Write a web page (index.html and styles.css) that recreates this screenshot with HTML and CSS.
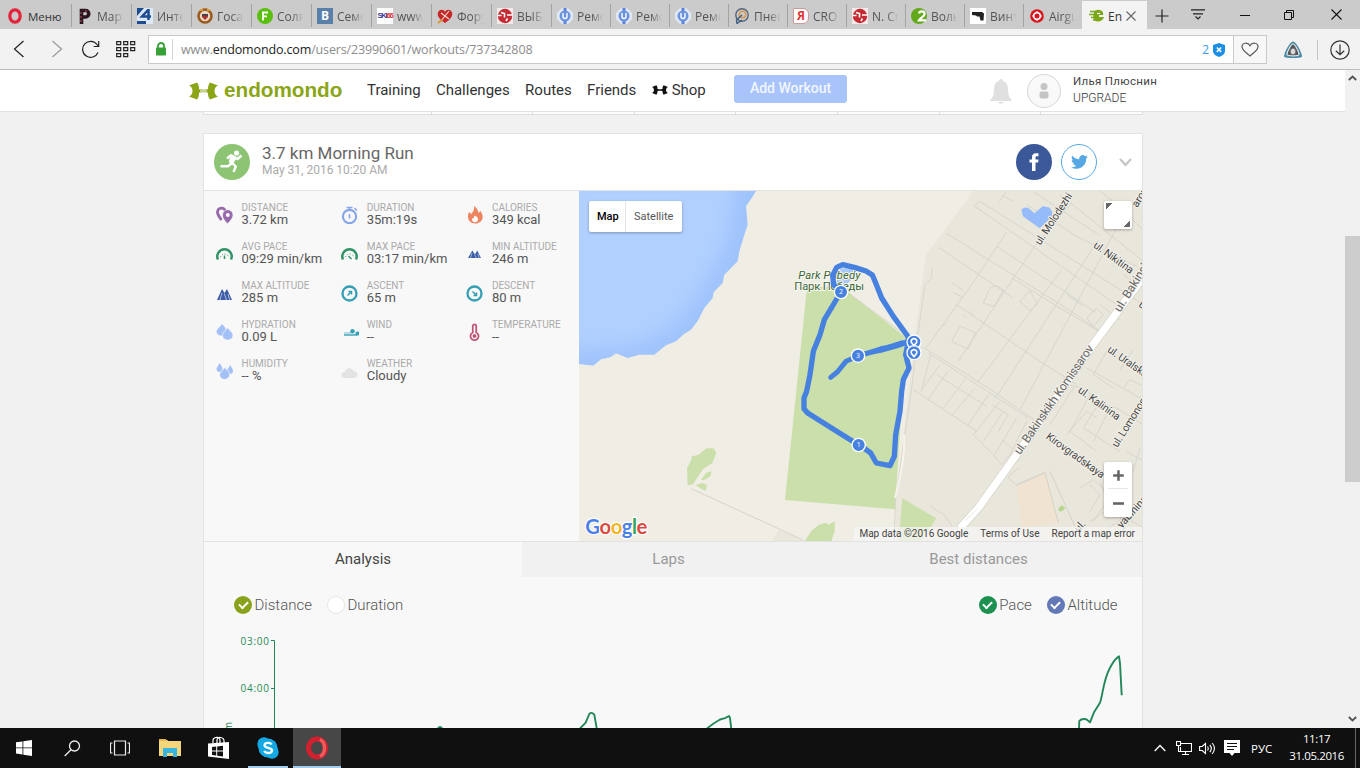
FILE: index.html
```
<!DOCTYPE html>
<html lang="en">

<head>
    <meta charset="UTF-8">
    <meta name="viewport" content="width=device-width, initial-scale=1.0">
    <title>Endomondo</title>
    <link rel="stylesheet" href="styles.css">
</head>

<body>

    <!-- Browser tabs -->
    <div class="tab-bar">
        <div class="menu-tab">
            <svg width="16" height="16" viewBox="0 0 16 16"><ellipse cx="8" cy="8" rx="5.2" ry="6.2" fill="none" stroke="#e3243b" stroke-width="3.2"/></svg>
            <span>Меню</span>
        </div>
        <div class="tab">
            <svg width="16" height="16" viewBox="0 0 16 16"><path d="M4.500 16V2.500h4a3 3 0 0 1 0 6.500H5" fill="none" stroke="#2b1520" stroke-width="3.600"/><path d="M4 14V3M8 3h2" stroke="#c0505a" stroke-width="1" stroke-dasharray="2 2"/></svg>
            <span>Маро</span>
        </div>
        <div class="tab">
            <svg width="16" height="16" viewBox="0 0 16 16"><path d="M0 0h16v16H0z" fill="#dfe9f5"/><path d="M0 0h7L0 8zM0 13h9v3H0z" fill="#1d4d90"/><path d="M11.500 1v11M11 2 5 8.500h9" fill="none" stroke="#1d4d90" stroke-width="2.500"/></svg>
            <span>Инте</span>
        </div>
        <div class="tab">
            <svg width="16" height="16" viewBox="0 0 16 16"><circle cx="8" cy="8" r="6.500" fill="#e8d9c0" stroke="#9a5a1e" stroke-width="2.600"/><path d="M5 6h6v3l-3 3-3-3z" fill="#a33"/><path d="M5 6h6v1.600H5z" fill="#345"/><path d="M3 2h3M10 2h3" stroke="#e0a030" stroke-width="2"/></svg>
            <span>Госав</span>
        </div>
        <div class="tab">
            <svg width="16" height="16" viewBox="0 0 16 16"><circle cx="8" cy="8" r="8" fill="#5bbf0f"/><path d="M6 12.500V4.500h5M6 8.300h4" fill="none" stroke="#fff" stroke-width="1.800"/></svg>
            <span>Соля</span>
        </div>
        <div class="tab">
            <span class="fav-letter vk">B</span>
            <span>Семе</span>
        </div>
        <div class="tab">
            <span class="fav-letter ski"><b>SKI</b><i>66</i></span>
            <span>www.</span>
        </div>
        <div class="tab">
            <svg width="16" height="16" viewBox="0 0 16 16"><path d="M8 15C2 11 0 8 1 4.500 2 1 7 1 8 4c1-3 6-3 7 .5C16 8 14 11 8 15z" fill="#c62828"/><path d="M4 5l8 6M12 3 4 13" stroke="#f2d6d0" stroke-width="1.200"/><path d="M1 15l4-3" stroke="#d9962e" stroke-width="2"/></svg>
            <span>Фору</span>
        </div>
        <div class="tab">
            <svg width="16" height="16" viewBox="0 0 16 16"><path d="M0 0h16v16H0z" fill="#f5eaea"/><circle cx="8" cy="8" r="7.200" fill="#c62a33"/><path d="M1 7.500h3.500M4 4.500l3.500 1v4M10 7h5.500M10.500 10.500 9 13" fill="none" stroke="#fff" stroke-width="1.600"/></svg>
            <span>ВЫБО</span>
        </div>
        <div class="tab narrow">
            <svg width="16" height="16" viewBox="0 0 16 16"><path d="M5 0h6l5 5v6l-5 5H5l-5-5V5z" fill="#e2e8f3"/><path d="M8 0v4M8 12v4" stroke="#5b84d8" stroke-width="3"/><circle cx="8" cy="8" r="5.500" fill="#6c93df"/><path d="M6 5v3.500a2 2 0 0 0 4 0V5" fill="none" stroke="#fff" stroke-width="1.400"/></svg>
            <span>Ремо</span>
        </div>
        <div class="tab narrow">
            <svg width="16" height="16" viewBox="0 0 16 16"><path d="M5 0h6l5 5v6l-5 5H5l-5-5V5z" fill="#e2e8f3"/><path d="M8 0v4M8 12v4" stroke="#5b84d8" stroke-width="3"/><circle cx="8" cy="8" r="5.500" fill="#6c93df"/><path d="M6 5v3.500a2 2 0 0 0 4 0V5" fill="none" stroke="#fff" stroke-width="1.400"/></svg>
            <span>Ремо</span>
        </div>
        <div class="tab narrow">
            <svg width="16" height="16" viewBox="0 0 16 16"><path d="M5 0h6l5 5v6l-5 5H5l-5-5V5z" fill="#e2e8f3"/><path d="M8 0v4M8 12v4" stroke="#5b84d8" stroke-width="3"/><circle cx="8" cy="8" r="5.500" fill="#6c93df"/><path d="M6 5v3.500a2 2 0 0 0 4 0V5" fill="none" stroke="#fff" stroke-width="1.400"/></svg>
            <span>Ремо</span>
        </div>
        <div class="tab narrow">
            <svg width="16" height="16" viewBox="0 0 16 16"><circle cx="8" cy="7" r="6.200" fill="none" stroke="#54657a" stroke-width="1.400"/><circle cx="8.500" cy="6.500" r="3.200" fill="none" stroke="#d69a55" stroke-width="1.500"/><path d="M8 7 2.500 12l.5 3.500L8 12" fill="none" stroke="#3e5c80" stroke-width="1.400"/></svg>
            <span>Пнев</span>
        </div>
        <div class="tab narrow">
            <span class="fav-letter ya">Я</span>
            <span>CRO</span>
        </div>
        <div class="tab narrow">
            <svg width="16" height="16" viewBox="0 0 16 16"><path d="M0 0h16v16H0z" fill="#f5eaea"/><circle cx="8" cy="8" r="7.200" fill="#c62a33"/><path d="M1 7.500h3.500M4 4.500l3.500 1v4M10 7h5.500M10.500 10.500 9 13" fill="none" stroke="#fff" stroke-width="1.600"/></svg>
            <span>N. Cr</span>
        </div>
        <div class="tab narrow">
            <svg width="16" height="16" viewBox="0 0 16 16"><circle cx="8" cy="8" r="8" fill="#62a81a"/><path d="M8 5.500c.5-3 6-3 5.500.8-.3 2-4 3.500-5.500 6h7" fill="none" stroke="#fff" stroke-width="2.300"/></svg>
            <span>Воль</span>
        </div>
        <div class="tab narrow">
            <svg width="16" height="16" viewBox="0 0 16 16"><path d="M0 0h16v16H0z" fill="#fff"/><path d="M2 4h10l2 1.500-.5 7h-3l-1-4H7L6 7.500 2 7z" fill="#222"/></svg>
            <span>Винт</span>
        </div>
        <div class="tab narrow">
            <svg width="16" height="16" viewBox="0 0 16 16"><circle cx="8" cy="8" r="6.800" fill="#d8141c"/><circle cx="8" cy="8" r="3.300" fill="none" stroke="#fff" stroke-width="1.600"/><path d="M8 3v2M8 11v2M3 8h2M11 8h2" stroke="#fff" stroke-width="1.200"/></svg>
            <span>Airgu</span>
        </div>
        <div class="tab active">
            <svg width="16" height="16" viewBox="0 0 16 16"><path d="M5 4.500C6 2 9 1 12 2.500c2 1 2.500 2.500 2 4.500h-4v2h5c-1 4-6 6-9 3.500C4 11 4 8 5 4.500z" fill="#7aa817"/><path d="M1 3.500h6M0 6.500h6M2 9.500h4M4 12h4" stroke="#7aa817" stroke-width="1.400"/><path d="M8 5.500h3" stroke="#fff" stroke-width="1.200"/></svg>
            <span>En</span>
            <svg class="tab-close" width="10" height="10" viewBox="0 0 10 10"><path d="M.5.5l9 9M9.500.5l-9 9" stroke="#666" stroke-width="1.100"/></svg>
        </div>
        <div class="window-buttons">
            <svg width="14" height="14" viewBox="0 0 14 14"><path d="M7 .5v13M.5 7h13" stroke="#222" stroke-width="1.200"/></svg>
            <svg width="14" height="12" viewBox="0 0 14 12"><path d="M0 .8h14M2 4.800h10M4.500 7.500 7 10l2.500-2.500" fill="none" stroke="#222" stroke-width="1.200"/></svg>
            <svg width="10" height="10" viewBox="0 0 10 10"><path d="M0 5.500h10" stroke="#111"/></svg>
            <svg width="10" height="10" viewBox="0 0 10 10"><path d="M.5 2.500h7v7h-7zM2.500 2.500v-2h7v7h-2" fill="none" stroke="#111"/></svg>
            <svg width="11" height="11" viewBox="0 0 11 11"><path d="M.5.5l10 10M10.500.5l-10 10" stroke="#111" stroke-width="1.100"/></svg>
        </div>
    </div>

    <!-- Address bar -->
    <div class="toolbar">
        <div class="nav-buttons">
            <svg width="12" height="18" viewBox="0 0 12 18"><path d="M10.500 1 1.500 9l9 8" fill="none" stroke="#222" stroke-width="1.200"/></svg>
            <svg width="12" height="18" viewBox="0 0 12 18"><path d="M1.500 1l9 8-9 8" fill="none" stroke="#999" stroke-width="1.200"/></svg>
            <svg width="20" height="18" viewBox="0 0 20 18"><path d="M17 12.500A8 8 0 1 1 16 4.500L17.500 6.500M17.700 1V6.500h-5" fill="none" stroke="#222" stroke-width="1.200"/></svg>
            <svg width="20" height="17" viewBox="0 0 20 17"><path d="M.7.700h4v3h-4zM7.700.700h4v3h-4zM14.700.700h4v3h-4zM.7 6.700h4v3h-4zM7.700 6.700h4v3h-4zM14.700 6.700h4v3h-4zM.7 12.700h4v3h-4zM7.700 12.700h4v3h-4z" fill="none" stroke="#222" stroke-width="1.200"/></svg>
        </div>
        <div class="address">
            <div class="lock">
                <svg width="10" height="14" viewBox="0 0 10 14"><path d="M2 7V4a3 3 0 0 1 6 0v3" fill="none" stroke="#37a137" stroke-width="1.800"/><rect y="5.500" width="10" height="8" rx=".8" fill="#37a137"/></svg>
            </div>
            <div class="url">www.<b>endomondo.com</b>/users/23990601/workouts/737342808</div>
            <span class="blocked">2</span>
            <svg class="shield" width="14" height="14" viewBox="0 0 14 14"><path d="M7 0l6 2v6c0 3-3 5-6 6-3-1-6-3-6-6V2z" fill="#1b8fe6"/><path d="M4.800 4.500l4.400 4.400M9.200 4.500 4.800 8.900" stroke="#fff" stroke-width="1.500"/></svg>
            <div class="heart">
                <svg width="18" height="15" viewBox="0 0 18 15"><path d="M9 14C5 10.500 1 8 1 4.700 1 .5 7 0 9 3.700 11 0 17 .5 17 4.700 17 8 13 10.500 9 14z" fill="none" stroke="#555" stroke-width="1.200"/></svg>
            </div>
        </div>
        <svg class="extension" width="20" height="18" viewBox="0 0 20 18"><path d="M10 .5c3 0 9 11 9 15 0 2-18 2-18 0C1 11.500 7 .5 10 .5z" fill="#4d8aa3"/><path d="M10 3c2 0 6 8 6 10.500 0 1.800-12 1.800-12 0C4 11 8 3 10 3z" fill="#555" stroke="#dfe8ec" stroke-width="1.200"/><ellipse cx="10" cy="10.500" rx="2.600" ry="3.300" fill="#ddd" stroke="#777"/></svg>
        <div class="download">
            <svg width="20" height="20" viewBox="0 0 20 20"><circle cx="10" cy="10" r="9.200" fill="none" stroke="#333" stroke-width="1.200"/><path d="M10 4.500v10M5.800 10.700l4.200 4 4.200-4" fill="none" stroke="#333" stroke-width="1.200"/></svg>
        </div>
    </div>

    <div class="viewport">
        <div class="page">
            <header class="site-header">
                <div class="logo">
                    <svg width="29" height="18" viewBox="0 0 29 18"><path d="M0 3.500 8 .5C10 3 10 5.500 10 7.300c3 .6 6 .6 9 0C19 5.500 19 3 21 .5l8 3c-2 .8-3.500 2.500-3.500 5.500s1.500 4.700 3.500 5.500l-8 3c-2-2.500-2-5-2-6.800-3-.6-6-.6-9 0 0 1.800 0 4.300-2 6.800l-8-3C2 13.700 3.500 12 3.500 9S2 4.300 0 3.500z" fill="#8aa516"/><path d="M11 9h7" stroke="#fff" stroke-width="1"/></svg>
                    <span>endomondo</span>
                </div>
                <nav class="site-nav">
                    <a>Training</a>
                    <a>Challenges</a>
                    <a>Routes</a>
                    <a>Friends</a>
                    <a class="shop"><svg width="16" height="10" viewBox="0 0 29 18"><path d="M0 3.500 8 .5C10 3 10 5.500 10 7c3 .6 6 .6 9 0C19 5.500 19 3 21 .5l8 3c-2 .8-3.500 2.500-3.500 5.500s1.500 4.700 3.500 5.500l-8 3c-2-2.500-2-5-2-6.500-3-.6-6-.6-9 0 0 1.500 0 4-2 6.500l-8-3C2 13.700 3.500 12 3.500 9S2 4.300 0 3.500z" fill="#111"/></svg>Shop</a>
                </nav>
                <button class="btn-add">Add Workout</button>
                <svg class="bell" width="22" height="25" viewBox="0 0 22 25"><path d="M11 0c1.500 0 2 1 2 2 3.500 1 5 4 5 8 0 6 1 8 3.500 10.500V22H.5v-1.500C3 18 4 16 4 10c0-4 1.500-7 5-8 0-1 .5-2 2-2z" fill="#e0e0e0"/><path d="M8 23h6c-.5 2-5.500 2-6 0z" fill="#e0e0e0"/></svg>
                <div class="avatar">
                    <svg width="10" height="18" viewBox="0 0 10 18"><circle cx="5" cy="4.500" r="3.500" fill="#c4c4c4"/><rect x=".5" y="9.500" width="9" height="7" rx="2" fill="#c4c4c4"/></svg>
                </div>
                <div class="user">
                    <div class="user-name">Илья Плюснин</div>
                    <div class="upgrade">UPGRADE</div>
                </div>
            </header>

            <div class="calendar-strip">
                <i class="wide"></i><i></i><i></i><i></i><i></i><i></i><i></i><i></i>
            </div>

            <main class="card">
                <div class="card-header">
                    <svg class="sport" width="36" height="36" viewBox="0 0 36 36"><circle cx="18" cy="18" r="18" fill="#8cc474"/><circle cx="22.600" cy="9" r="2.600" fill="#fff"/><path d="M13 14.500l4-3.200 4.500 2.200-3.300 5.500 3.600 3.500-2.300 5.500M17.500 19.500 14 22.300H6.500M20.500 13l3 2 4-3.500" fill="none" stroke="#fff" stroke-width="2.400" stroke-linejoin="round"/><path d="M18.500 12 17 19" fill="none" stroke="#fff" stroke-width="4.500"/></svg>
                    <div class="card-title">
                        <h1>3.7 km Morning Run</h1>
                        <p>May 31, 2016 10:20 AM</p>
                    </div>
                    <div class="social facebook">
                        <svg width="10" height="18" viewBox="0 0 10 18"><path d="M9.500.3v3H8c-1 0-1.500.4-1.500 1.500v1.700h3l-.4 3H6.500V18H3V9.500H.5v-3H3V4C3 1.500 4.500.2 7 .2z" fill="#fff"/></svg>
                    </div>
                    <div class="social twitter">
                        <svg width="17" height="14" viewBox="0 0 24 20"><path d="M24 2.400a10 10 0 0 1-2.800.8A5 5 0 0 0 23.300.5a10 10 0 0 1-3.100 1.200 4.900 4.900 0 0 0-8.400 4.500A14 14 0 0 1 1.700 1a4.900 4.900 0 0 0 1.500 6.600A5 5 0 0 1 1 7a4.900 4.900 0 0 0 3.900 4.900 5 5 0 0 1-2.200 0 4.900 4.900 0 0 0 4.600 3.400A10 10 0 0 1 0 17.400 14 14 0 0 0 21.500 5c1-.7 1.800-1.600 2.500-2.600z" fill="#55a8e4"/></svg>
                    </div>
                    <svg class="chevron" width="13" height="9" viewBox="0 0 13 9"><path d="M1 1l5.500 6L12 1" fill="none" stroke="#c8c8c8" stroke-width="2.400"/></svg>
                </div>

                <div class="workout">
                    <div class="stats">
                        <div class="stat">
                            <svg width="18" height="18" viewBox="0 0 18 18"><path d="M5.500 14C3 10.500 1.500 9 1.500 6.300a4 4 0 0 1 8-.5" fill="none" stroke="#9668ac" stroke-width="2.800"/><path d="M11.500 18C8.500 14 6.500 12.500 6.500 9a5 5 0 0 1 10.500 0c0 3.500-2.500 5-5.500 9z" fill="#9668ac" stroke="#f8f8f8" stroke-width=".6"/><circle cx="11.800" cy="9" r="2" fill="#f8f8f8"/></svg>
                            <div><h4>Distance</h4><p>3.72 km</p></div>
                        </div>
                        <div class="stat">
                            <svg width="18" height="18" viewBox="0 0 18 18"><circle cx="8.500" cy="10.500" r="6.600" fill="none" stroke="#87a6e8" stroke-width="2.200"/><path d="M5.500 1.500h6M8.500 1.500v3M13.500 2l2.500 2.500M8.500 8v4.500" stroke="#87a6e8" stroke-width="1.600"/></svg>
                            <div><h4>Duration</h4><p>35m:19s</p></div>
                        </div>
                        <div class="stat">
                            <svg width="18" height="18" viewBox="0 0 18 18"><path d="M8 0c4 3 4 5 4.500 7L14.500 5C20 13 14 17.500 9 17.500S0 13 3 6L5.500 8C7.500 5 8.500 3 8 0z" fill="#ef8461"/><path d="M8.500 9.500c3 1.500 3.500 2.500 3.500 4 0 3.500-6 3.500-6 0 0-1 .8-1.500 1.500-1z" fill="#fff"/></svg>
                            <div><h4>Calories</h4><p>349 kcal</p></div>
                        </div>
                        <div class="stat">
                            <svg width="18" height="18" viewBox="0 0 18 18"><path d="M2 14.500a7.200 7.200 0 1 1 13 0" fill="none" stroke="#33946a" stroke-width="2.500"/><path d="M4.500 12a4.500 4.500 0 0 1 8.500 0" fill="none" stroke="#33946a" stroke-dasharray="1 1.700"/><path d="M8.500 10.500v3.500" stroke="#33946a" stroke-width="1.500"/></svg>
                            <div><h4>Avg pace</h4><p>09:29 min/km</p></div>
                        </div>
                        <div class="stat">
                            <svg width="18" height="18" viewBox="0 0 18 18"><path d="M2 14.500a7.200 7.200 0 1 1 13 0" fill="none" stroke="#33946a" stroke-width="2.500"/><path d="M4.500 12a4.500 4.500 0 0 1 8.500 0" fill="none" stroke="#33946a" stroke-dasharray="1 1.700"/><path d="M7.500 11l3 3" stroke="#33946a" stroke-width="1.500"/></svg>
                            <div><h4>Max pace</h4><p>03:17 min/km</p></div>
                        </div>
                        <div class="stat">
                            <svg width="18" height="18" viewBox="0 0 18 18"><path d="M2 13 6.300 5.500 9 9.500l2.200-4L15 13z" fill="#3c5ca5"/><path d="M6 8l-1.500 5M8.700 9.500l1.600 3.500M12 9l1.200 4" stroke="#dfe7f5" stroke-width=".6"/></svg>
                            <div><h4>Min altitude</h4><p>246 m</p></div>
                        </div>
                        <div class="stat">
                            <svg width="18" height="18" viewBox="0 0 18 18"><path d="M1 16 6 5l2.500 4L11 5l5 11z" fill="#3c5ca5"/><path d="M6 9l-2 7M8.200 9.500 10.500 16M12 10l1.700 6" stroke="#dfe7f5" stroke-width=".7"/></svg>
                            <div><h4>Max altitude</h4><p>285 m</p></div>
                        </div>
                        <div class="stat">
                            <svg width="18" height="18" viewBox="0 0 18 18"><circle cx="8.500" cy="9.500" r="7" fill="none" stroke="#359fb5" stroke-width="2.300"/><path d="M6.500 11.500 10 8M7.500 7.500h3v3" fill="none" stroke="#359fb5" stroke-width="1.500"/></svg>
                            <div><h4>Ascent</h4><p>65 m</p></div>
                        </div>
                        <div class="stat">
                            <svg width="18" height="18" viewBox="0 0 18 18"><circle cx="8.500" cy="9.500" r="7" fill="none" stroke="#359fb5" stroke-width="2.300"/><path d="M6.500 7.500 10 11M10.500 8.500v3h-3" fill="none" stroke="#359fb5" stroke-width="1.500"/></svg>
                            <div><h4>Descent</h4><p>80 m</p></div>
                        </div>
                        <div class="stat">
                            <svg width="18" height="18" viewBox="0 0 18 18"><path d="M6 1c3 3 4 5 4 7.500C10 14 .5 14 .5 8.500.5 6 4.500 4 6 1z" fill="#a3c0f7"/><path d="M11 4.500c3 3 6 5 6 8 0 6-10.500 6-10.500 0 0-3 3.500-5 4.500-8z" fill="#a3c0f7" stroke="#f8f8f8" stroke-width=".7"/></svg>
                            <div><h4>Hydration</h4><p>0.09 L</p></div>
                        </div>
                        <div class="stat">
                            <svg width="18" height="18" viewBox="0 0 18 18"><path d="M3 10h7" stroke="#8cc6d2" stroke-width="1.200"/><path d="M3 12h13" stroke="#359fb5" stroke-width="1.400"/><circle cx="11.500" cy="8.300" r="2.200" fill="#359fb5"/><circle cx="16.500" cy="10.500" r="2.100" fill="#359fb5"/></svg>
                            <div><h4>Wind</h4><p>--</p></div>
                        </div>
                        <div class="stat">
                            <svg width="18" height="18" viewBox="0 0 18 18"><path d="M6.800 9.500V3a1.700 1.700 0 0 1 3.400 0v6.500a4 4 0 1 1-3.400 0z" fill="#fff" stroke="#bd5877" stroke-width="1.800"/><circle cx="8.500" cy="13" r="2" fill="#bd5877"/></svg>
                            <div><h4>Temperature</h4><p>--</p></div>
                        </div>
                        <div class="stat">
                            <svg width="18" height="18" viewBox="0 0 18 18"><path d="M3.500 1c2 3 3 4 3 6 0 4-6 4-6 0 0-2 2-3 3-6zM14 3c2 3 3 4 3 6 0 4-6 4-6 0 0-2 2-3 3-6z" fill="#a3c0f7"/><path d="M8.700 5.500c3 3 5 4.500 5 7 0 6.500-10 6.500-10 0 0-2.500 3-4 5-7z" fill="#a3c0f7" stroke="#f8f8f8" stroke-width=".7"/></svg>
                            <div><h4>Humidity</h4><p>-- %</p></div>
                        </div>
                        <div class="stat">
                            <svg width="18" height="18" viewBox="0 0 18 18"><path d="M3.500 16a3 3 0 0 1 0-6c1-4 7-5.500 9-1 5-.5 5 7 1 7z" fill="#e3e3e3"/></svg>
                            <div><h4>Weather</h4><p>Cloudy</p></div>
                        </div>
                    </div>

                    <div class="map">
                        <svg class="map-canvas" width="563" height="350" viewBox="0 0 1689 1050">
                            <defs>
                                <filter id="shore" x="-20%" y="-20%" width="140%" height="140%"><feGaussianBlur stdDeviation="26"/></filter>
                                <clipPath id="lake"><path d="M0 0H531L520 18 501 46 506 101 495 135 481 181 476 211 436 251 431 276 404 304 401 321 376 351 356 390 336 416 316 428 291 451 261 463 226 491 181 491 146 501 111 487 94 499 66 505 43 524 0 519z"/></clipPath>
                            </defs>
                            <rect width="1689" height="1050" fill="#f0ede5"/>
                            <path d="M1183 0 1040 194 1010 420 951 930 948 1050h741V0z" fill="#e9e6dc"/>
                            <path d="M580 1050l20-34 80 34z" fill="#e9e6dc"/>

                            <!-- lake -->
                            <g clip-path="url(#lake)">
                                <rect width="560" height="540" fill="#9fc3fc"/>
                                <path d="M-40-40h510l-30 190-55 110-70 100-60 60-90 40-205 20z" fill="#b1d0ff" filter="url(#shore)"/>
                            </g>

                            <!-- parks -->
                            <path d="M684 290l100-5 70 55 134 105-20 200-20 310-330-28z" fill="#cadfaa"/>
                            <path d="M970 922l102 60-45 68h-68z" fill="#cadfaa"/>
                            <path d="M326 882l-2-50 13-26 1-10 20-4 24-20 22 0 8 14-12 30-28 18-16 24-14 22zM366 866l16-20 16-6-4 16-20 12zM350 882l20-6 14 6-4 18-18-10z" fill="#cadfaa"/>
                            <path d="M677 1050l22-32 20-16 20-7 10 6 18-10 0 30-10 29z" fill="#cadfaa"/>
                            <path d="M337 893 670 1046" stroke="#d6d3ca" stroke-width="3"/>
                            <path d="M784 232l38 0 0 30-24 22-28 0z" fill="#a9c9f9"/>
                            <path d="M820 315l60 44 110 80" fill="none" stroke="#d8d5cc" stroke-width="3"/>

                            <g transform="translate(843 -9)">
                                <!-- side streets -->
                                <g fill="none" stroke="#d4d2c9" stroke-width="2.500">
                                    <path d="M345 50l15-10 500 315M340 52l310 215 130 90M258 135l120 75 240 150 120 82M236 178l220 150M276 284l34 24M280 314l28 14"/>
                                    <path d="M440 132 345 275 200 478M520 180 295 520M605 245 352 585M715 155 410 625M770 120 480 665M634 45 520 180M440 9l-22 32M430 25l30 15"/>
                                    <path d="M410 175l300 200M455 270l120 75 150 90M290 350l250 170 110 70M500 50l150 95 180 90M520 12l200 130M600 20l250 200M720 9l60 48 70 70"/>
                                    <path d="M190 478l200 125 150 105M205 495l300 195M212 500l-28 110M160 605l190 125M240 530l-55 75M265 548l-60 85M315 575l-65 85M345 600l-68 80M385 620l-60 90M230 560l150 95"/>
                                    <path d="M370 345l18-40q12-20 34-5l8 6-28 50zM275 460l25-46 46 20-22 50zM480 340l30-32 22 40-22 20zM245 415l14-8M310 380l10 10M330 368l8 12"/>
                                    <path d="M420 640 340 740 400 800 425 830 450 800M430 670l-60 90M470 690l-66 110M395 650l50 30-30 50M500 700l-50 100 30 20M455 780l-30-25M478 838l-35 30 25 22 85-35"/>
                                    <path d="M215 240l0 30-20 20-20 140-20 170-48 330-5 130M212 955l40 25 25 36" />
                                    <path d="M620 590l50 10 60 50 40 10 80 50M640 600l-70 110M680 540l90 50 80 45M740 490l-40 70 60 40M690 620l-60 110 80 60M720 640l-50 80 110 70M750 660l-50 100M620 740l60-70 30 20M790 600l20-25 40 20"/>
                                    <path d="M850 300l-60-40M680 390l30-30 20 20-30 35zM720 350l60 45M620 320l50 35M780 545l40-60M660 900l40-25 50 45 40 90M690 890l30 30-30 50M720 880l20 60-40 60M740 900l60 30-10 60-60 40M690 1000l60-40 100 60M800 790l50 30M780 760l50-70M840 780l-20 70"/>
                                </g>
                                <path d="M470 895l85-40 40 150-110 12z" fill="#f1e3d1"/>
                                <path d="M470 892l85-38 40 150M570 850l75 165" fill="none" stroke="#d4d2c9" stroke-width="3"/>
                                <path d="M596 960l10-8 10 8-10 10-10 0z" fill="#b7d68c"/>
                                <path d="M484 65q12-12 24-3l15 14 26-22 20 5 8 14-2 14-36 34-50-36z" fill="#96bbfb"/>
                                <path d="M105 930q30-110 28-190" fill="none" stroke="#f5f3ec" stroke-width="6"/>

                                <!-- Bakinskikh Komissarov -->
                                <path d="M870 240 690 482 470 800 355 960 305 1015V1060" fill="none" stroke="#d5d2c8" stroke-width="26"/>
                                <path d="M870 240 690 482 470 800 355 960 305 1015V1060" fill="none" stroke="#fff" stroke-width="22"/>
                                <path d="M352 962l-35 35" stroke="#ddd" stroke-width="2"/>

                                <!-- street names -->
                                <g class="street">
                                    <text transform="translate(541 173) rotate(-57)" textLength="178">ul. Molodezhi</text>
                                    <text transform="translate(698 176) rotate(36)" textLength="140">ul. Nikitina</text>
                                    <text transform="translate(740 490) rotate(35)" textLength="140">ul. Uralska</text>
                                    <text transform="translate(652 611) rotate(36)" textLength="148">ul. Kalinina</text>
                                    <text transform="translate(556 750) rotate(36)" textLength="208">Kirovgradskaya</text>
                                    <text transform="translate(772 780) rotate(-58)" textLength="215">ul. Lomonosova</text>
                                    <text transform="translate(834 354) rotate(36)">ul. </text>
                                    <text transform="translate(832 60) rotate(-58)">arova</text>
                                    <text transform="translate(785 1022) rotate(-48)">yabinina</text>
                                    <text transform="translate(656 1034) rotate(-48)">ul.</text>
                                </g>
                                <g class="street big">
                                    <text transform="translate(480 802) rotate(-55.300)" textLength="390">ul. Bakinskikh Komissarov</text>
                                    <text transform="translate(781 374) rotate(-58)">ul. Bakinskikh</text>
                                </g>
                            </g>

                            <g class="park-name">
                                <text x="658" y="264" textLength="186" font-style="italic">Park Pobedy</text>
                                <text x="646" y="297" textLength="209">Парк Победы</text>
                            </g>

                            <!-- track -->
                            <g fill="none" stroke="#4781e0" stroke-width="16" stroke-linecap="round" stroke-linejoin="round">
                                <path d="M785 303 764 281 761 253 773 229 791 221 826 229 861 240 880 252 888 271 908 321 943 376 988 438 986 461 980 491 990 531 973 566 968 601 963 661 950 731 946 796 933 824 892 816 875 786 848 766 839 762 761 713 686 666 675 653 675 621 683 601 693 551 703 481 723 431 736 386 766 336z"/>
                                <path d="M755 559l20-16 26-32 38-17 60-16 70-22 25-3" stroke-width="15"/>
                                <path d="M853 487l52-17 90-16-40 14-52 14z" fill="#4781e0" stroke-width="8"/>
                            </g>
                            <g class="marker">
                                <circle cx="786" cy="303" r="20"/><text x="786" y="310">2</text>
                                <circle cx="837" cy="494" r="20"/><text x="837" y="501">3</text>
                                <circle cx="839" cy="762" r="20"/><text x="839" y="769">1</text>
                                <circle cx="1005" cy="453" r="21"/>
                                <circle cx="1005" cy="485" r="21"/>
                            </g>
                            <g fill="none" stroke="#fff" stroke-width="5">
                                <path d="M1005 464l-8-10a8.500 8.500 0 1 1 16 0zM1005 497l-8-10a8.500 8.500 0 1 1 16 0z"/>
                            </g>

                            <text class="google" x="19" y="1028" textLength="186"><tspan fill="#4a80e8">G</tspan><tspan fill="#dd4b3e">o</tspan><tspan fill="#f2b51d">o</tspan><tspan fill="#4a80e8">g</tspan><tspan fill="#35a456">l</tspan><tspan fill="#dd4b3e">e</tspan></text>
                        </svg>
                        <div class="map-type"><b>Map</b><span>Satellite</span></div>
                        <div class="fullscreen"></div>
                        <div class="zoom">
                            <svg width="28" height="28" viewBox="0 0 28 28"><path d="M14.500 8.500v11M9 14h11" stroke="#666" stroke-width="2.600"/></svg>
                            <svg width="28" height="28" viewBox="0 0 28 28"><path d="M9 14.500h11" stroke="#666" stroke-width="2.600"/></svg>
                        </div>
                        <div class="map-legal"><span>Map data ©2016 Google</span><span>Terms of Use</span><span>Report a map error</span></div>
                    </div>
                </div>

                <div class="tabs">
                    <div class="selected">Analysis</div>
                    <div class="laps">Laps</div>
                    <div class="best">Best distances</div>
                </div>

                <div class="legend">
                    <label><i class="check olive"></i>Distance</label>
                    <label><i class="check empty"></i>Duration</label>
                    <label class="push"><i class="check green"></i>Pace</label>
                    <label><i class="check blue"></i>Altitude</label>
                </div>

                <svg class="chart" width="938" height="120" viewBox="0 0 938 120">
                    <path d="M67 13.500h3.500V120M67 61.500h3.500" fill="none" stroke="#1e8a56"/>
                    <text x="36.500" y="17.800" textLength="28.500">03:00</text>
                    <text x="36.500" y="65" textLength="28.500">04:00</text>
                    <text transform="translate(27.500 95) rotate(-90)" text-anchor="end">min/km</text>
                    <g fill="none" stroke="#23875a" stroke-width="1.900" stroke-linejoin="round">
                        <path d="M233.500 102q2.500-4 5 0"/>
                        <path d="M376 101.500l5.700-5.800 3.600-8.700q2.400-2.500 5 .7l2.500 14"/>
                        <path d="M503 101.500q6-5 13-9l5-1.300 4-2.200 1 2 1.300 11"/>
                        <path d="M875 102l.3-8q2-2.700 7-1.800l3.700 3.100 4-10 6-9.600c3-8 3-22 10-35q5-9.400 9-11.400l1 7 1.700 32"/>
                    </g>
                </svg>
            </main>
        </div>
        <div class="scrollbar">
            <svg width="9" height="6" viewBox="0 0 9 6"><path d="M.8 5 4.500 1.500 8.200 5" fill="none" stroke="#555" stroke-width="1.800"/></svg>
            <div class="thumb"></div>
            <svg width="9" height="6" viewBox="0 0 9 6"><path d="M.8 1l3.700 3.500L8.200 1" fill="none" stroke="#555" stroke-width="1.800"/></svg>
        </div>
    </div>

    <!-- Taskbar -->
    <div class="taskbar">
        <div class="task"><svg width="16" height="16" viewBox="0 0 16 16"><path d="M0 2.300 6.500 1.400v6.100H0zM7.300 1.200 16 0v7.500H7.300zM0 8.300h6.500v6.200L0 13.600zM7.300 8.300H16V16l-8.700-1.300z" fill="#fff"/></svg></div>
        <div class="task"><svg width="17" height="17" viewBox="0 0 17 17"><circle cx="10.500" cy="6" r="5" fill="none" stroke="#eee" stroke-width="1.300"/><path d="M7 9.700.7 16" stroke="#eee" stroke-width="1.300"/></svg></div>
        <div class="task"><svg width="20" height="16" viewBox="0 0 20 16"><path d="M4.500 1h11v14h-11zM2.500 3h-2v10h2M17.500 3h2v10h-2" fill="none" stroke="#eee" stroke-width="1.200"/></svg></div>
        <div class="task folder"><svg width="22" height="20" viewBox="0 0 22 20"><path d="M0 2h8l1.500 1H22v15H0z" fill="#f6d67c"/><path d="M0 1h7v2H0z" fill="#e8b84a"/><path d="M4 19v-9h14v9h-4v-4H8v4z" fill="#36b5e0"/></svg></div>
        <div class="task"><svg width="22" height="24" viewBox="0 0 22 24"><path d="M0 7.500 21 6v17L0 20.500z" fill="#fff"/><path d="M5 7V4.500C5 1 12 0 12 4v3M9 7V4c0-4 7-3 7 1v2" fill="none" stroke="#fff" stroke-width="1.200"/><path d="M4 11l4.200-.5v4H4zM9.200 10.400l5.800-.7v4.800H9.200zM4 15.500h4.200v4L4 18.900zM9.200 15.500H15v5l-5.800-.8z" fill="#111"/></svg></div>
        <div class="task open"><svg width="22" height="22" viewBox="0 0 22 22"><circle cx="7" cy="7" r="6.700" fill="#14a9e4"/><circle cx="15" cy="15" r="6.700" fill="#14a9e4"/><circle cx="11" cy="11" r="9.500" fill="#14a9e4"/><path d="M14.500 7.500c-1.500-2.500-7-2-7 .8 0 3.200 7.500 1.800 7.500 5.200 0 3-6 3.500-7.800.5" fill="none" stroke="#fff" stroke-width="2.300"/></svg></div>
        <div class="task current"><svg width="24" height="24" viewBox="0 0 24 24"><ellipse cx="12" cy="12" rx="8.500" ry="9" fill="none" stroke="#d3202e" stroke-width="5"/><path d="M15 3.500c6 3 6 14 0 17" fill="none" stroke="#ee5a5c" stroke-width="3.500"/></svg></div>
        <div class="tray">
            <svg width="12" height="8" viewBox="0 0 12 8"><path d="M.7 7 6 1.500 11.300 7" fill="none" stroke="#fff" stroke-width="1.300"/></svg>
            <svg width="16" height="14" viewBox="0 0 16 14"><path d="M5 2.500h10.500v8H4.500V6M.5.500h4v4h-4zM2.500 4.500v6h2M9.500 10.500v3M6 13.500h7" fill="none" stroke="#fff" stroke-width="1.100"/></svg>
            <svg width="17" height="13" viewBox="0 0 17 13"><path d="M.6 4.500h2.600l3.300-3v10l-3.300-3H.6zM8.500 4.500q1.500 2 0 4M10.800 2.800q3 3.700 0 7.400M13.200 1q4.500 5.500 0 11" fill="none" stroke="#fff" stroke-width="1.100"/></svg>
            <svg width="16" height="16" viewBox="0 0 16 16"><path d="M0 0h16v13h-5.500L8 16l-2.500-3H0z" fill="#fff"/><path d="M3 3.500h10M3 6.500h10M3 9.500h7" stroke="#111" stroke-width="1.200"/></svg>
            <span class="lang">РУС</span>
            <div class="clock"><div>11:17</div><div>31.05.2016</div></div>
        </div>
    </div>

</body>

</html>
```
FILE: styles.css
```
* {
    box-sizing: border-box;
}

body {
    margin: 0;
    width: 1360px;
    height: 768px;
    overflow: hidden;
    display: flex;
    flex-direction: column;
    font-family: Roboto, sans-serif;
    background-color: #f1f1f1;
}

h1,
h4,
p {
    margin: 0;
    font-weight: 400;
}

svg {
    display: block;
    flex-shrink: 0;
}

/* browser chrome */
.tab-bar {
    height: 29px;
    display: flex;
    background-color: #cbcbcb;
    font: 12px "Open Sans", sans-serif;
    color: #555;
}

.menu-tab {
    width: 71px;
    padding: 3px 0 0 7px;
    display: flex;
    align-items: center;
    gap: 5px;
    font-size: 11.5px;
    color: #333;
}

.tab {
    width: 60px;
    padding: 3px 0 0 6px;
    display: flex;
    align-items: center;
    gap: 4px;
    position: relative;
    white-space: nowrap;
}

.tab::before {
    content: "";
    position: absolute;
    left: 0;
    top: 4px;
    height: 23px;
    border-left: 1px solid #a3a3a3;
}

.tab.narrow {
    width: 59px;
}

.tab > span:last-child {
    width: 27px;
    overflow: hidden;
    -webkit-mask-image: linear-gradient(to right, #000 55%, transparent 98%);
    mask-image: linear-gradient(to right, #000 55%, transparent 98%);
}

.tab.active {
    width: 65px;
    margin-top: 1px;
    padding: 2px 0 0 7px;
    gap: 3px;
    background-color: #f3f3f3;
    color: #333;
}

.tab.active::before {
    display: none;
}

.tab-close {
    margin-left: 1px;
}

.fav-letter {
    width: 16px;
    height: 16px;
    flex-shrink: 0;
    text-align: center;
    font: bold 12px/16px "Open Sans", sans-serif;
}

.vk {
    background-color: #5880a9;
    color: #fff;
}

.ski {
    background-color: #fff;
    font: bold 7.5px/16px "Liberation Sans", sans-serif;
    letter-spacing: -1.2px;
    color: #3b3b9c;
}

.ski i {
    font-style: normal;
    color: #d33;
}

.ya {
    background-color: #fff;
    border: 1px solid #c99;
    border-radius: 1px 6px 6px 1px;
    line-height: 14px;
    color: #d33;
}

.window-buttons {
    display: flex;
    align-items: center;
    padding-left: 8px;
}

.window-buttons svg:nth-child(1) { margin-top: 3px; }
.window-buttons svg:nth-child(2) { margin-left: 22px; }
.window-buttons svg:nth-child(3) { margin-left: 35px; }
.window-buttons svg:nth-child(4) { margin-left: 34px; }
.window-buttons svg:nth-child(5) { margin-left: 37px; }

.toolbar {
    height: 41px;
    padding-top: 6px;
    display: flex;
    align-items: flex-start;
    background-color: #f2f2f2;
    border-bottom: 1px solid #bcbcbc;
}

.nav-buttons {
    width: 148px;
    height: 28px;
    padding-left: 13px;
    display: flex;
    align-items: center;
}

.nav-buttons svg:nth-child(2) { margin-left: 26px; }
.nav-buttons svg:nth-child(3) { margin-left: 18px; }
.nav-buttons svg:nth-child(4) { margin-left: 15px; }

.address {
    width: 1119px;
    height: 29px;
    display: flex;
    align-items: center;
    background-color: #fff;
    border: 1px solid #c9c9c9;
}

.lock {
    width: 24px;
    height: 21px;
    padding: 3px 0 0 7px;
    border-right: 1px solid #d5d5d5;
}

.url {
    flex: 1;
    padding: 0 0 1px 8px;
    font: 12.5px "Open Sans", sans-serif;
    letter-spacing: -0.14px;
    color: #8c8c8c;
}

.url b {
    font-weight: 400;
    color: #222;
}

.blocked {
    margin-right: 3px;
    font: 12px "Open Sans", sans-serif;
    color: #3d9be8;
}

.shield {
    margin-right: 7px;
}

.heart {
    width: 33px;
    height: 27px;
    display: flex;
    align-items: center;
    justify-content: center;
    background-color: #f7f7f7;
    border-left: 1px solid #c9c9c9;
}

.extension {
    margin: 6px 0 0 16px;
}

.download {
    margin: 5px 0 0 14px;
    padding-left: 12px;
    border-left: 1px solid #c4c4c4;
}

/* page */
.viewport {
    height: 658px;
    display: flex;
    overflow: hidden;
}

.page {
    width: 1345px;
    height: 658px;
    overflow: hidden;
}

.site-header {
    height: 42px;
    padding-left: 189px;
    display: flex;
    align-items: center;
    background-color: #fff;
    border-bottom: 1px solid #e2e2e2;
}

.logo {
    width: 178px;
    display: flex;
    align-items: center;
    gap: 6px;
    font: bold 20.7px/20px "Liberation Sans", sans-serif;
    color: #8aa516;
}

.logo span {
    margin-top: -2px;
}

.site-nav {
    width: 367px;
    margin-top: -2px;
    display: flex;
    gap: 15.3px;
    font-size: 15px;
    color: #333;
}

.site-nav .shop {
    display: flex;
    align-items: center;
    gap: 4px;
}

.btn-add {
    width: 113px;
    height: 28px;
    margin-top: -3px;
    padding: 0 0 2px;
    font: 500 14px Roboto, sans-serif;
    color: #f2f6ff;
    background-color: #a8c4fb;
    border: none;
    border-radius: 3px;
}

.bell {
    margin: 2px 0 0 143px;
}

.avatar {
    width: 34px;
    height: 34px;
    margin-left: 15px;
    display: flex;
    align-items: center;
    justify-content: center;
    background-color: #f9f9f9;
    border: 1px solid #d6d6d6;
    border-radius: 50%;
}

.user {
    margin: -2px 0 0 12px;
    font-size: 12px;
    line-height: 17px;
    color: #333;
}

.user-name {
    font-size: 11.5px;
    letter-spacing: 0.3px;
    color: #444;
}

.upgrade {
    font-weight: 300;
}

.calendar-strip {
    width: 940px;
    height: 3px;
    margin-left: 203px;
    display: flex;
    background-color: #fbfbfb;
    border: solid #dfdfdf;
    border-width: 0 1px 1px;
}

.calendar-strip i {
    flex: 1;
    border-left: 1px solid #dfdfdf;
}

.calendar-strip .wide {
    flex: 0 0 226.5px;
    border: none;
}

.card {
    width: 940px;
    height: 640px;
    margin: 18px 0 0 203px;
    background-color: #f8f8f8;
    border: 1px solid #e2e2e2;
}

.card-header {
    height: 57px;
    padding: 0 10px;
    display: flex;
    align-items: center;
    background-color: #fff;
    border-bottom: 1px solid #e2e2e2;
}

.card-title {
    flex: 1;
    margin-top: -2px;
    padding-left: 12px;
}

.card-title h1 {
    font-size: 17px;
    line-height: 19px;
    color: #666;
}

.card-title p {
    font-size: 12px;
    line-height: 15px;
    color: #aaa;
}

.social {
    width: 36px;
    height: 36px;
    margin-right: 9px;
    display: flex;
    align-items: center;
    justify-content: center;
    border-radius: 50%;
}

.facebook {
    background-color: #3b5998;
}

.twitter {
    margin-right: 22px;
    border: 1px solid #55a8e4;
}

.workout {
    height: 350px;
    display: flex;
}

.stats {
    width: 375px;
    padding-top: 8px;
    display: grid;
    grid-template-columns: repeat(3, 125.2px);
    grid-auto-rows: 39px;
}

.stat {
    padding-left: 11.5px;
    display: flex;
    gap: 8px;
}

.stat svg {
    margin-top: 7px;
}

.stat h4 {
    padding-top: 3px;
    font-size: 10px;
    line-height: 12px;
    text-transform: uppercase;
    color: #aaa;
}

.stat p {
    font-size: 13px;
    line-height: 12px;
    color: #555;
}

.map {
    width: 563px;
    height: 350px;
    position: relative;
    overflow: hidden;
}

.street text {
    font: 32px Roboto, sans-serif;
    fill: #444;
    stroke: #f3f1ea;
    stroke-width: 6px;
    paint-order: stroke;
}

.street.big text {
    font-size: 36px;
    fill: #666;
}

.park-name text {
    font-family: Roboto, sans-serif;
    font-size: 34px;
    fill: #3a6638;
    stroke: #f6f5ee;
    stroke-width: 6px;
    paint-order: stroke;
}

.marker circle {
    fill: #4781e0;
    stroke: #fff;
    stroke-width: 4px;
}

.marker text {
    font: 21px "Open Sans", sans-serif;
    fill: #fff;
    text-anchor: middle;
}

.google {
    font: 700 61px Lato, sans-serif;
    stroke: #fff;
    stroke-width: 7px;
    paint-order: stroke;
}

.map-type,
.fullscreen,
.zoom,
.map-legal {
    position: absolute;
    background-color: #fff;
}

.map-type,
.fullscreen,
.zoom {
    border-radius: 2px;
    box-shadow: 0 1px 3px rgba(0, 0, 0, 0.3);
}

.map-type {
    left: 10px;
    top: 10px;
    height: 31px;
    display: flex;
    font-size: 11px;
    line-height: 31px;
    color: #565656;
}

.map-type b {
    width: 37px;
    padding-left: 8px;
    font-weight: 500;
    color: #000;
    border-right: 1px solid #e6e6e6;
}

.map-type span {
    width: 56px;
    padding-left: 8px;
}

.fullscreen {
    right: 10px;
    top: 10px;
    width: 28px;
    height: 28px;
    background-image: linear-gradient(135deg, #666 4.6px, transparent 4.6px), linear-gradient(315deg, #666 4.6px, transparent 4.6px);
    background-size: 24px 24px;
    background-position: 2px 2px;
    background-repeat: no-repeat;
}

.zoom {
    right: 10px;
    bottom: 24px;
    width: 28px;
    height: 55px;
}

.zoom svg:first-child {
    height: 27px;
    background: linear-gradient(#e6e6e6, #e6e6e6) no-repeat 4px 26px / 20px 1px;
}

.map-legal {
    right: 0;
    bottom: 0;
    height: 14px;
    padding: 0 7px 0 5px;
    display: flex;
    gap: 12px;
    font-size: 10px;
    line-height: 14px;
    color: #444;
    background-color: rgba(245, 245, 245, 0.75);
}

.tabs {
    height: 36px;
    display: flex;
    border-top: 1px solid #e2e2e2;
    font-size: 15px;
    line-height: 34px;
    text-align: center;
    color: #999;
}

.tabs div {
    background-color: #f1f1f1;
}

.tabs .selected {
    width: 318px;
    color: #444;
    background-color: #f8f8f8;
}

.tabs .laps {
    width: 293px;
}

.tabs .best {
    width: 327px;
}

.legend {
    height: 50px;
    padding: 6px 24.5px 0 30px;
    display: flex;
    align-items: center;
    gap: 15px;
    font-size: 15px;
    font-weight: 300;
    color: #555;
}

.legend label {
    display: flex;
    align-items: center;
    gap: 2.5px;
}

.legend .push {
    margin-left: auto;
}

.check {
    width: 18px;
    height: 18px;
    border-radius: 50%;
    display: flex;
    justify-content: center;
    padding-top: 5px;
}

.check::after {
    content: "";
    box-sizing: border-box;
    width: 9px;
    height: 6px;
    border: solid #fff;
    border-width: 0 0 2.5px 2.5px;
    transform: rotate(-45deg);
}

.olive { background-color: #88a31b; }
.green { background-color: #1c9150; }
.blue { background-color: #6378b6; }

.empty {
    background-color: #fff;
    border: 1px solid #e6e6e6;
}

.chart text {
    font: 10px "Open Sans", sans-serif;
    fill: #1e8a56;
}

.scrollbar {
    width: 15px;
    height: 658px;
    padding: 5px 0 6px;
    display: flex;
    flex-direction: column;
    align-items: center;
    background-color: #f1f1f1;
}

.thumb {
    width: 15px;
    height: 246px;
    margin: 155px 0 auto;
    background-color: #cdcdcd;
}

/* taskbar */
.taskbar {
    height: 40px;
    display: flex;
    background-color: #101010;
    color: #fff;
}

.task {
    width: 48px;
    display: flex;
    align-items: center;
    justify-content: center;
}

.folder {
    margin-left: 2px;
}

.folder ~ .task {
    margin-left: 1px;
}

.task.open {
    background: linear-gradient(#a3cdef, #a3cdef) no-repeat 4px 38px / 40px 2px;
}

.task.current {
    background-color: #474747;
    border-bottom: 2px solid #a3cdef;
    padding-top: 2px;
}

.tray {
    width: 202px;
    margin-left: auto;
    margin-right: 4px;
    display: flex;
    align-items: center;
    border-right: 1px solid #666;
    font: 12px "Open Sans", sans-serif;
}

.tray svg:nth-child(2) { margin-left: 10px; }
.tray svg:nth-child(3) { margin-left: 7px; }
.tray svg:nth-child(4) { margin-left: 8px; }

.lang {
    margin-left: 11px;
    font-size: 11.5px;
}

.clock {
    margin: -2px 0 0 17px;
    text-align: center;
    font-size: 11.5px;
    line-height: 17px;
    letter-spacing: -0.4px;
}
```
